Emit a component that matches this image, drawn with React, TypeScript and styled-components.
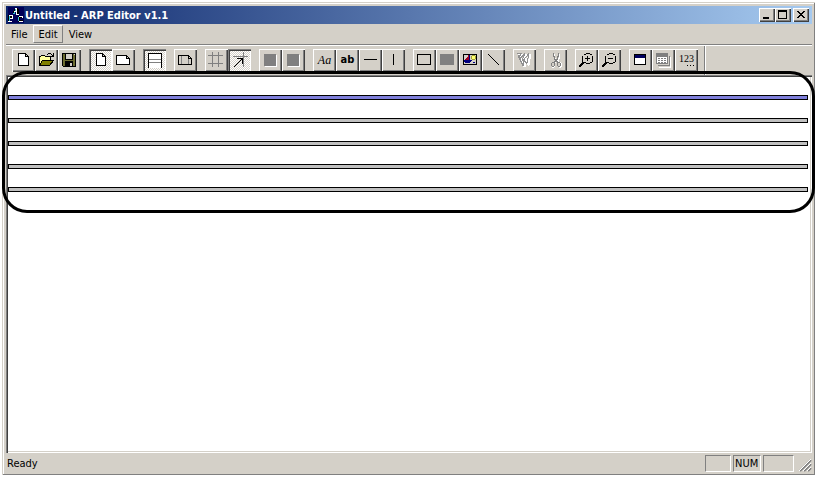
import React from "react";
import styled, { createGlobalStyle, css } from "styled-components";

const FACE = "#d4d0c8";
const SHADOW = "#808080";
const DARK = "#404040";

const GlobalStyle = createGlobalStyle`
  * { box-sizing: border-box; }
  body {
    margin: 0;
    background: #fff;
    color: #000;
    font: 11px/14px "DejaVu Sans Condensed", Tahoma, sans-serif;
  }
`;

const raised = css`
  box-shadow: inset 1px 1px #fff, inset -1px -1px ${DARK}, inset -2px -2px ${SHADOW};
`;

const sunken = css`
  box-shadow: inset 1px 1px ${SHADOW}, inset 2px 2px ${DARK}, inset -1px -1px #fff;
`;

const Screen = styled.div`
  display: flex;
  height: 100vh;
  padding: 2px;
`;

const AppWindow = styled.div`
  flex: 1;
  min-width: 0;
  display: flex;
  flex-direction: column;
  padding: 4px 3px 3px 4px;
  background: ${FACE};
  box-shadow: inset 1px 1px ${FACE}, inset -1px -1px ${SHADOW}, inset 2px 2px #fff;
`;

const TitleBar = styled.header`
  display: flex;
  align-items: center;
  height: 18px;
  padding: 0 3px 0 2px;
  background: linear-gradient(90deg, #0a246a, #a6caf0);
`;

const Title = styled.h1`
  flex: 1;
  margin: 0 0 0 1px;
  color: #fff;
  font-size: 11px;
  line-height: 16px;
  padding-top: 1px;
  font-weight: bold;
`;

const CaptionButton = styled.button<{ $apart?: boolean }>`
  width: 16px;
  height: 14px;
  margin: 0 0 0 ${(p) => (p.$apart ? 2 : 0)}px;
  padding: 0;
  border: 0;
  background: ${FACE};
  ${raised}
`;

const MenuBar = styled.nav`
  display: flex;
  align-items: flex-start;
  gap: 1px;
  height: 22px;
  padding-top: 1px;
  border-bottom: 1px solid #fff;
  box-shadow: inset 0 -1px ${SHADOW};
`;

const MenuItem = styled.button<{ $hot?: boolean }>`
  height: 18px;
  padding: 1px 4px 0;
  border: 1px solid transparent;
  background: none;
  color: #000;
  font: inherit;
  ${(p) => p.$hot && `border-color: #fff ${SHADOW} ${SHADOW} #fff;`}
`;

const ToolBar = styled.div`
  display: flex;
  height: 29px;
  padding-left: 6px;
`;

const ToolGroup = styled.div`
  display: flex;
  padding-top: 3px;
  margin-right: 8px;
`;

const ToolEnd = styled.div`
  width: 2px;
  margin-left: -2px;
  background: linear-gradient(90deg, ${SHADOW} 50%, #fff 50%);
`;

const ToolButton = styled.button<{ $pressed?: boolean }>`
  display: flex;
  align-items: center;
  justify-content: center;
  width: 23px;
  height: 23px;
  padding: 0;
  border: 0;
  color: #000;
  background: ${FACE};
  ${raised}
  ${(p) =>
    p.$pressed &&
    css`
      background: conic-gradient(#fff 25%, ${FACE} 0 50%, #fff 0 75%, ${FACE} 0) 0 0 / 2px 2px;
      ${sunken}
    `}
`;

const Glyph = styled.span<{ $kind: "italic" | "bold" | "digits" }>`
  padding-bottom: 2px;
  ${(p) => p.$kind === "italic" && `font: italic 12px/14px "Liberation Serif", serif;`}
  ${(p) => p.$kind === "bold" && `font: bold 11px/14px "DejaVu Sans Condensed", sans-serif;`}
  ${(p) =>
    p.$kind === "digits" &&
    `font: 10px/12px "Liberation Serif", serif; padding-bottom: 4px;
     background: repeating-linear-gradient(90deg, #000 0 1px, transparent 1px 3px) right 12px / 7px 1px no-repeat;`}
`;

const Client = styled.main`
  position: relative;
  flex: 1;
  min-height: 0;
  padding: 20px 4px 2px 2px;
  background: #fff;
  box-shadow: inset 1px 1px ${SHADOW}, inset 2px 2px ${DARK}, inset -1px -1px #fff, inset -2px -2px ${FACE};
`;

const Bands = styled.div`
  display: flex;
  flex-direction: column;
  gap: 18px;
`;

const Band = styled.div<{ $selected?: boolean }>`
  height: 5px;
  border: 1px solid #000;
  background: ${(p) => (p.$selected ? "#8080dc" : "#c0c0c0")};
`;

const Callout = styled.div`
  position: absolute;
  inset: -4px -3px auto -4px;
  height: 142px;
  border: 3px solid #000;
  border-radius: 25px;
  pointer-events: none;
`;

const StatusBar = styled.footer`
  display: flex;
  align-items: stretch;
  gap: 2px;
  height: 19px;
  padding: 2px 0 0 1px;
`;

const StatusText = styled.span`
  flex: 1;
  line-height: 18px;
`;

const Pane = styled.span<{ $w: number }>`
  width: ${(p) => p.$w}px;
  padding-left: 1px;
  line-height: 16px;
  border: 1px solid;
  border-color: ${SHADOW} #fff #fff ${SHADOW};
`;

const Grip = styled.svg`
  align-self: flex-end;
`;

const Drawing = styled.svg`
  display: block;
  fill: none;
  stroke: #000;
  shape-rendering: crispEdges;
`;

const drawings: Record<string, React.ReactNode> = {
  new: <path d="M6.5 4.5h7l3 3v9h-10zM13.5 4.5v3h3" fill="#fff" />,
  open: (
    <>
      <path d="M4.5 16.5v-9h1l1-1h3l1 1h5v3" fill="#ffff9c" />
      <path d="M4.5 16.5l3-5h11l-4 5z" fill="#808000" />
      <path d="M12 5.5h1M13 4.5h3M16 5.5h1M17 6.5h2M18.5 4v3M16 7.5h3" />
    </>
  ),
  save: (
    <>
      <path d="M4.5 4.5h13v13h-12l-1-1z" fill="#6c6c30" />
      <path d="M7.5 4.5h7v6h-7z" fill="#d4d0c8" />
      <path d="M7 12h8v6H7z" fill="#000" stroke="none" />
      <path d="M12 14h2v3h-2zM16 5h1v1h-1z" fill="#d4d0c8" stroke="none" />
    </>
  ),
  portrait: <path d="M7.5 4.5h6l3 3v9h-9zM13.5 4.5v3h3" fill="#fff" />,
  landscape: <path d="M4.5 6.5h10l3 3v6h-13zM14.5 6.5v3h3" fill="#fff" />,
  bands: (
    <>
      <path d="M5 4h14v15H5z" fill="#fff" stroke="none" />
      <path d="M5.5 19V4.5h13V19" />
      <path d="M6 10.5h12M6 13.5h12" stroke="#808080" />
    </>
  ),
  margins: (
    <>
      <path d="M4.5 6.5h10l3 3v6h-13zM14.5 6.5v3h3" />
      <path d="M7.5 7v8M14.5 10v5" stroke="#808080" />
    </>
  ),
  grid: <path d="M7.5 3v15M13.5 3v15M3 6.5h15M3 14.5h15" stroke="#808080" />,
  snap: (
    <>
      <path d="M15.5 3v15M5 7.5h15" stroke="#808080" />
      <path d="M6 17.5h1M7 16.5h1M8 15.5h1M9 14.5h1M10 13.5h1M11 12.5h1M12 11.5h1M13 10.5h1M9 9.5h5.5V15" />
    </>
  ),
  block: (
    <>
      <path d="M6 6h12v12H6z" fill="#fff" stroke="none" />
      <path d="M5 5h12v12H5z" fill="#808080" stroke="none" />
    </>
  ),
  hline: <path d="M5 10.5h13" />,
  vline: <path d="M11.5 5v11" />,
  rect: <path d="M4.5 5.5h13v10h-13z" />,
  fill: <path d="M4 5h14v11H4z" fill="#808080" stroke="none" />,
  picture: (
    <>
      <path d="M4.5 5.5h13v10h-13z" fill="#d4d0c8" />
      <path d="M10 6v6H5v-1h1v-1h1V9h1V8h1V6z" fill="#a00020" stroke="none" />
      <path d="M10 6h1v5h-1zM5 11h8v1h-1v1h-1v1H6v-1H5zM14 13h2v1h-2z" fill="#000080" stroke="none" />
      <path d="M13 7h3v3h-3z" fill="#ffff70" stroke="none" />
      <path d="M13 6.5h3M13 10.5h3M12.5 7v3M16.5 7v3" stroke="#a0a030" />
    </>
  ),
  diagonal: <path d="M6 5.5h1M7 6.5h1M8 7.5h1M9 8.5h1M10 9.5h1M11 10.5h1M12 11.5h1M13 12.5h1M14 13.5h1M15 14.5h1M16 15.5h1" />,
  check: (
    <>
      <path d="M5.5 5.5l6 12v-6l4 4 2-10M9.5 5.5l-2 4M13.5 5.5l-4 8M17.5 5.5l-5 6" stroke="#fff" strokeWidth="2" />
      <path d="M4 4.5h4l-2 4M5 6.5l5 10v-6l4 4 2-10M7 9.5l5-5-3 7M15.5 5l-5 6" stroke="#909090" />
    </>
  ),
  cut: (
    <>
      <path d="M10.5 5v4h1v2h3v2h2v1h1v3h-1v1h-2M15.5 5v4h-1v3h-3v1h-1v4h-1v1h-2" stroke="#fff" />
      <path d="M9.5 4v4M10.5 7v4M14.5 4v4M13.5 7v4M11 10.5h2M11 11.5h2M10 12.5h4M8 13.5h2M14 13.5h2M7.5 14v3M10.5 13v4M13.5 13v4M16.5 14v3M8 17.5h2M14 17.5h2" stroke="#808080" />
    </>
  ),
  zoomIn: (
    <>
      <path d="M10.5 4.5h4M8.5 5.5h2M14.5 5.5h2M7.5 6.5v6M17.5 6.5v6M8.5 13.5h2M14.5 13.5h2M10.5 14.5h4M10 9.5h5M12.5 7v5" />
      <path d="M8.5 13.5L4 18" strokeWidth="2" />
    </>
  ),
  zoomOut: (
    <>
      <path d="M10.5 4.5h4M8.5 5.5h2M14.5 5.5h2M7.5 6.5v6M17.5 6.5v6M8.5 13.5h2M14.5 13.5h2M10.5 14.5h4M10 9.5h5" />
      <path d="M8.5 13.5L4 18" strokeWidth="2" />
    </>
  ),
  form: (
    <>
      <path d="M5.5 5.5h11v10h-11z" fill="#fff" />
      <path d="M5 5h12v4H5z" fill="#000060" stroke="none" />
      <path d="M5.5 5.5h11v10h-11z" />
    </>
  ),
  table: (
    <>
      <path d="M7 18.5h11.5V8" stroke="#fff" />
      <path d="M4.5 4.5h11v10h-11zM6 16.5h11.5V7" stroke="#808080" />
      <path d="M5 5h10v3H5z" fill="#808080" stroke="none" />
      <path d="M5 8h10v6H5z" fill="#fff" stroke="none" />
      <path d="M6 9.5h8M6 11.5h8M6 13.5h8" stroke="#808080" strokeDasharray="2 1" />
    </>
  ),
};

type Tool = { name: string; icon?: string; text?: string; kind?: "italic" | "bold" | "digits"; pressed?: boolean };

const groups: Tool[][] = [
  [{ name: "New", icon: "new" }, { name: "Open", icon: "open" }, { name: "Save", icon: "save" }],
  [{ name: "Portrait", icon: "portrait", pressed: true }, { name: "Landscape", icon: "landscape" }],
  [{ name: "Show bands", icon: "bands", pressed: true }],
  [{ name: "Page margins", icon: "margins" }],
  [{ name: "Grid", icon: "grid" }, { name: "Snap to grid", icon: "snap", pressed: true }],
  [{ name: "Bring to front", icon: "block" }, { name: "Send to back", icon: "block" }],
  [
    { name: "Label", text: "Aa", kind: "italic" },
    { name: "Field", text: "ab", kind: "bold" },
    { name: "Horizontal line", icon: "hline" },
    { name: "Vertical line", icon: "vline" },
  ],
  [
    { name: "Rectangle", icon: "rect" },
    { name: "Filled rectangle", icon: "fill" },
    { name: "Picture", icon: "picture" },
    { name: "Line", icon: "diagonal" },
  ],
  [{ name: "Check", icon: "check" }],
  [{ name: "Cut", icon: "cut" }],
  [{ name: "Zoom in", icon: "zoomIn" }, { name: "Zoom out", icon: "zoomOut" }],
  [
    { name: "Properties", icon: "form" },
    { name: "Data table", icon: "table" },
    { name: "Numbering", text: "123", kind: "digits" },
  ],
];

const bands = [true, false, false, false, false];

export default function App() {
  return (
    <Screen>
      <GlobalStyle />
      <AppWindow>
        <TitleBar>
          <Drawing width="16" height="16" viewBox="0 0 16 16" aria-hidden="true">
            <path d="M0 0h16v16H0z" fill="#000058" stroke="none" />
            <path d="M5 7V4h1V2h1V1h3v1h1v5H9V5H7v2zM0 8h5v4H2v3H0zM10 9h5v2h-3v2h3v2h-5z" fill="#000" stroke="none" />
            <path d="M5 6.5h2M6 5.5h1M7 2v3M1.5 9v6M10.5 10v4" stroke="#38c0d8" />
            <path d="M7 1.5h2M8.5 2v5M6 4.5h3M8 7.5h3M1 8.5h4M4.5 9v3M2 11.5h3M0 14.5h4M11 9.5h4M14.5 10v1M11 14.5h4" stroke="#fff" />
          </Drawing>
          <Title>Untitled - ARP Editor v1.1</Title>
          <CaptionButton aria-label="Minimize">
            <Drawing width="16" height="14"><path d="M4 10h6" strokeWidth="2" /></Drawing>
          </CaptionButton>
          <CaptionButton aria-label="Maximize">
            <Drawing width="16" height="14"><path d="M3.5 2.5h8v8h-8zM3 3.5h9" /></Drawing>
          </CaptionButton>
          <CaptionButton aria-label="Close" $apart>
            <Drawing width="16" height="14">
              <path d="M4 3.5h2M5 4.5h2M6 5.5h4M7 6.5h2M6 7.5h4M5 8.5h2M4 9.5h2M10 3.5h2M9 4.5h2M9 8.5h2M10 9.5h2" />
            </Drawing>
          </CaptionButton>
        </TitleBar>
        <MenuBar aria-label="Menu">
          <MenuItem>File</MenuItem>
          <MenuItem $hot>Edit</MenuItem>
          <MenuItem>View</MenuItem>
        </MenuBar>
        <ToolBar role="toolbar" aria-label="Tools">
          {groups.map((group) => (
            <ToolGroup key={group[0].name}>
              {group.map((t) => (
                <ToolButton key={t.name} aria-label={t.name} $pressed={t.pressed}>
                  {t.icon ? (
                    <Drawing width="23" height="23">{drawings[t.icon]}</Drawing>
                  ) : (
                    <Glyph $kind={t.kind!}>{t.text}</Glyph>
                  )}
                </ToolButton>
              ))}
            </ToolGroup>
          ))}
          <ToolEnd />
        </ToolBar>
        <Client>
          <Bands>
            {bands.map((selected, i) => (
              <Band key={i} $selected={selected} />
            ))}
          </Bands>
          <Callout />
        </Client>
        <StatusBar>
          <StatusText>Ready</StatusText>
          <Pane $w={26} />
          <Pane $w={28}>NUM</Pane>
          <Pane $w={31} />
          <Grip width="16" height="14" aria-hidden="true">
            <path d="M4 13L15 2M8 13l7-7M12 13l3-3" stroke="#808080" strokeWidth="2" />
            <path d="M3 13L15 1M7 13l8-8M11 13l4-4" stroke="#fff" />
          </Grip>
        </StatusBar>
      </AppWindow>
    </Screen>
  );
}
